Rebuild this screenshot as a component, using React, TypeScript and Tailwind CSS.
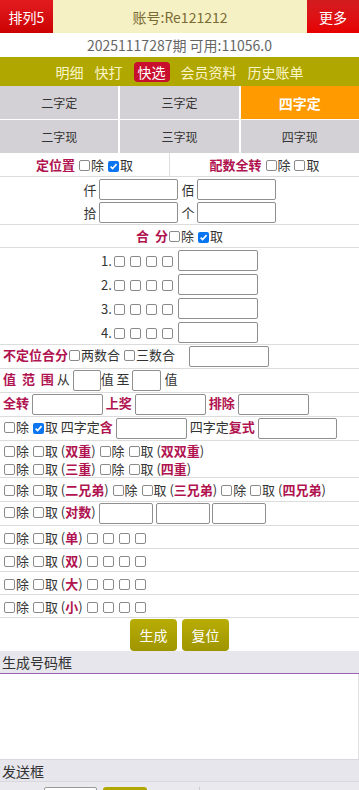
import React from "react";

const FONT = { fontFamily: '"Noto Sans CJK SC", "Noto Sans", sans-serif' };

function Cb({ checked = false }: { checked?: boolean }) {
  if (checked) {
    return (
      <span className="inline-flex items-center justify-center w-[11px] h-[11px] rounded-[2px] bg-[#0a75f0] mx-[1px] align-[-1px]">
        <svg width="9" height="9" viewBox="0 0 10 10">
          <path d="M1.8 5.2 L4 7.4 L8.4 2.4" stroke="#fff" strokeWidth="1.8" fill="none" />
        </svg>
      </span>
    );
  }
  return <span className="inline-block w-[11px] h-[11px] rounded-[2px] border border-[#8a8a8a] bg-white mx-[1px] align-[-1px]" />;
}

function Inp({ w = "w-[79px]" }: { w?: string }) {
  return <span className={`inline-block ${w} h-[21px] border border-[#8f8f8f] rounded-[2px] bg-white align-middle`} />;
}

function Red({ children }: { children: React.ReactNode }) {
  return <span className="text-[#b0134f] font-bold">{children}</span>;
}

function ChuQu({ qu = false }: { qu?: boolean }) {
  return (
    <>
      <Cb />除&nbsp;<Cb checked={qu} />取
    </>
  );
}

function Boxes() {
  return (
    <span className="inline-flex gap-[3px] align-[-1px]">
      <Cb /><Cb /><Cb /><Cb />
    </span>
  );
}

// one line of the form; inner block keeps the spaces between words
function Row({ children, className = "" }: { children: React.ReactNode; className?: string }) {
  return (
    <div className={`flex items-center border-b border-[#dcdcdc] px-[3px] ${className}`}>
      <div className="whitespace-nowrap">{children}</div>
    </div>
  );
}

export default function App() {
  const tabs = [
    { t: "二字定" },
    { t: "三字定" },
    { t: "四字定", active: true },
    { t: "二字现" },
    { t: "三字现" },
    { t: "四字现" },
  ];
  return (
    <div style={FONT} className="w-[359px] h-[790px] overflow-hidden bg-white text-[13px] text-[#333] leading-none">
      {/* header */}
      <div className="flex h-[33px] bg-[#f6f1c4]">
        <div className="w-[53px] flex items-center justify-center text-white text-[14px] bg-gradient-to-b from-[#e21b1f] to-[#cc0000]">排列5</div>
        <div className="flex-1 flex items-center justify-center text-[14px] text-[#7a6b35]">账号:Re121212</div>
        <div className="w-[52px] flex items-center justify-center text-white text-[14px] bg-gradient-to-b from-[#d21b1f] to-[#e80000]">更多</div>
      </div>
      <div className="h-[24px] flex items-center justify-center text-[14px] text-[#666]">20251117287期 可用:11056.0</div>
      {/* nav */}
      <div className="h-[29px] bg-[#b0a700] flex items-center justify-center gap-[11px] text-[14px] text-[#fdf6c8]">
        <span>明细</span>
        <span>快打</span>
        <span className="bg-[#c8102e] text-white px-[4px] py-[3px] rounded-[4px]">快选</span>
        <span>会员资料</span>
        <span>历史账单</span>
      </div>
      {/* tabs */}
      <div className="grid grid-cols-3 gap-x-[2px] gap-y-[1px] bg-white">
        {tabs.map((x) => (
          <div
            key={x.t}
            className={`h-[33px] flex items-center justify-center ${x.active ? "bg-[#ff9a00] text-white text-[14px] font-bold" : "bg-[#d3d1d5] text-[12px] text-[#333]"}`}
          >
            {x.t}
          </div>
        ))}
      </div>
      {/* 定位置 / 配数全转 */}
      <div className="flex h-[24px] border-b border-[#dcdcdc]">
        <div className="w-[170px] flex items-center justify-center border-r border-[#dcdcdc]">
          <div className="whitespace-nowrap"><Red>定位置</Red> <ChuQu qu /></div>
        </div>
        <div className="flex-1 flex items-center justify-center">
          <div className="whitespace-nowrap"><Red>配数全转</Red> <ChuQu /></div>
        </div>
      </div>
      <div className="border-b border-[#dcdcdc] pt-[1px]">
        <div className="flex items-center justify-center h-[23px] gap-[2px]">
          <span>仟</span><Inp /><span className="ml-[2px]">佰</span><Inp />
        </div>
        <div className="flex items-center justify-center h-[23px] gap-[2px]">
          <span>拾</span><Inp /><span className="ml-[2px]">个</span><Inp />
        </div>
      </div>
      <Row className="h-[23px] justify-center">
        <Red>合&nbsp;&nbsp;分</Red><ChuQu qu />
      </Row>
      <div className="border-b border-[#dcdcdc]">
        {[1, 2, 3, 4].map((n) => (
          <div key={n} className="flex items-center justify-center h-[24px]">
            <span className="mr-[1px]">{n}.</span>
            <span className="mr-[4px]"><Boxes /></span>
            <Inp w="w-[80px]" />
          </div>
        ))}
      </div>
      <Row className="h-[24px]">
        <Red>不定位合分</Red><Cb />两数合 <Cb />三数合
        <span className="ml-[14px]"><Inp w="w-[80px]" /></span>
      </Row>
      <Row className="h-[24px]">
        <Red>值&nbsp;&nbsp;范&nbsp;&nbsp;围</Red> 从 <Inp w="w-[28px]" />值 至 <Inp w="w-[29px]" /> 值
      </Row>
      <Row className="h-[24px]">
        <Red>全转</Red> <Inp w="w-[71px]" /> <Red>上奖</Red> <Inp w="w-[71px]" /> <Red>排除</Red> <Inp w="w-[71px]" />
      </Row>
      <Row className="h-[24px]">
        <ChuQu qu /> 四字定<Red>含</Red> <Inp w="w-[71px]" /> 四字定<Red>复式</Red> <Inp w="w-[79px]" />
      </Row>
      <div className="border-b border-[#dcdcdc] px-[3px] pt-[1px] leading-[18px] h-[37px] whitespace-nowrap">
        <div><ChuQu /> (<Red>双重</Red>) <ChuQu /> (<Red>双双重</Red>)</div>
        <div><ChuQu /> (<Red>三重</Red>) <ChuQu /> (<Red>四重</Red>)</div>
      </div>
      <Row className="h-[24px]">
        <ChuQu /> (<Red>二兄弟</Red>) <ChuQu /> (<Red>三兄弟</Red>) <ChuQu /> (<Red>四兄弟</Red>)
      </Row>
      <Row className="h-[24px]">
        <ChuQu /> (<Red>对数</Red>) <Inp w="w-[54px]" /> <Inp w="w-[54px]" /> <Inp w="w-[54px]" />
      </Row>
      {["单", "双", "大", "小"].map((s) => (
        <Row key={s} className="h-[23px]">
          <ChuQu /> (<Red>{s}</Red>) <Boxes />
        </Row>
      ))}
      {/* buttons */}
      <div className="flex justify-center gap-[5px] pt-[1px] h-[33px]">
        <button className="w-[47px] h-[32px] rounded-[4px] bg-gradient-to-b from-[#b8ad05] to-[#9f9500] text-white text-[14px]">生成</button>
        <button className="w-[47px] h-[32px] rounded-[4px] bg-gradient-to-b from-[#b8ad05] to-[#9f9500] text-white text-[14px]">复位</button>
      </div>
      <div className="h-[23px] bg-[#e6e6ec] border-b border-[#9b5fb5] flex items-center px-[2px] text-[14px] text-[#333]">生成号码框</div>
      <div className="h-[85px] bg-white border-r border-[#e0e0e0]" />
      <div className="h-[23px] bg-[#e6e6ec] border-t border-[#d8d8de] border-b border-[#9b5fb5] flex items-center px-[2px] text-[14px] text-[#333]">发送框</div>
      <div className="h-[30px] bg-[#e9e9ee] flex items-start pt-[5px] pl-[44px] gap-[6px]">
        <span className="inline-block w-[53px] h-[20px] border border-[#999] rounded-[2px] bg-white" />
        <span className="inline-block w-[44px] h-[20px] rounded-[3px] bg-[#b0a700]" />
        <span className="ml-[46px] border-l border-[#ccc] h-[20px]" />
      </div>
    </div>
  );
}
